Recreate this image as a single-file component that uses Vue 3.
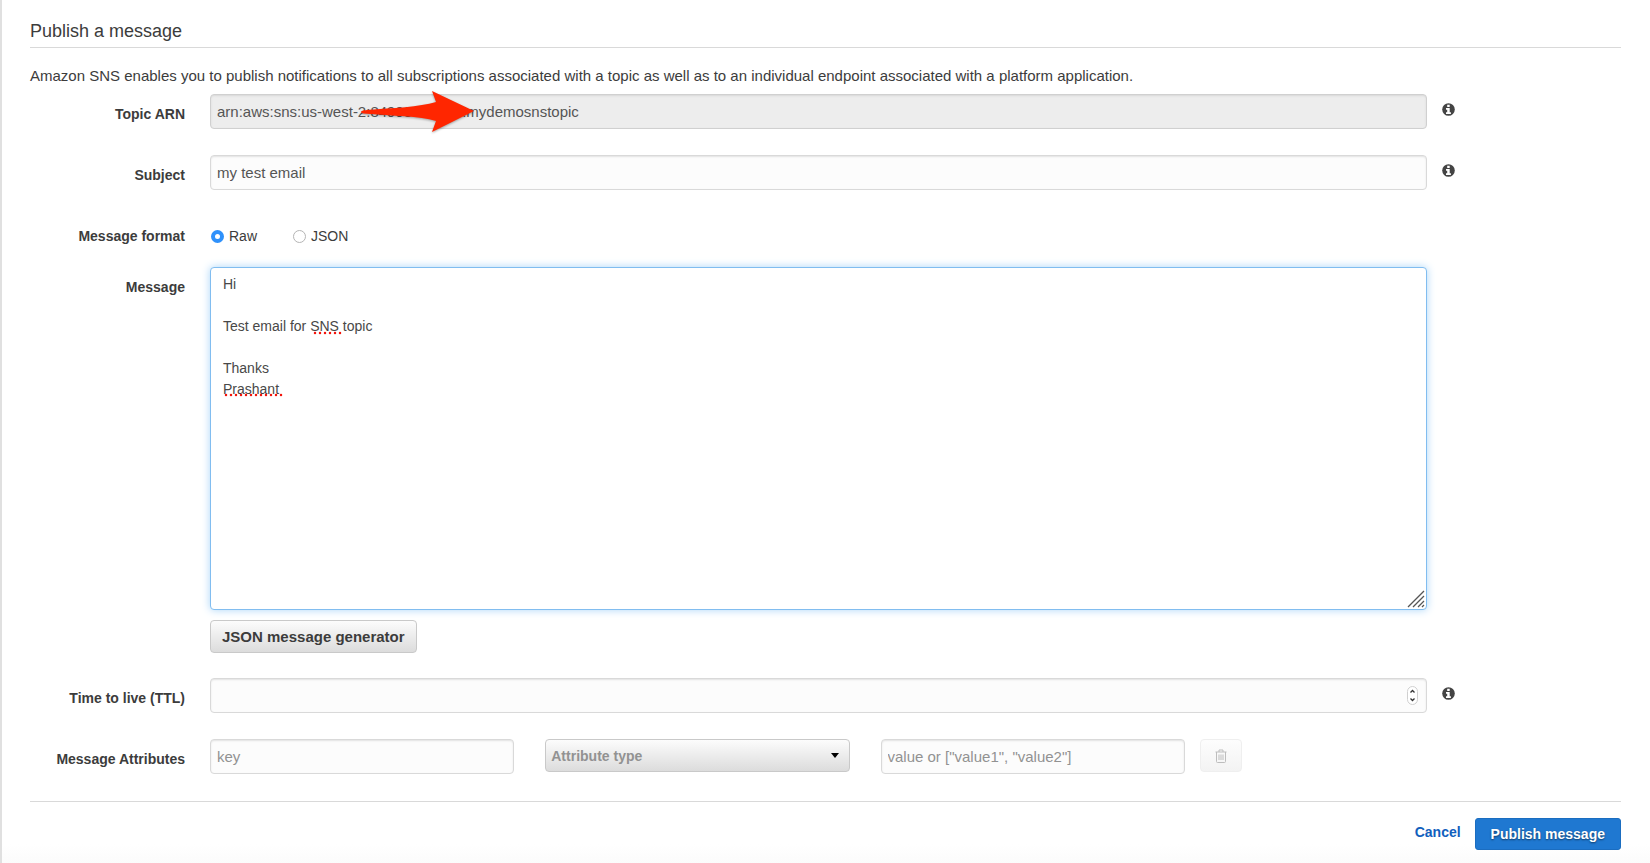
<script setup>
import { ref } from 'vue'

const arn = ref('arn:aws:sns:us-west-2:84993412000:mydemosnstopic')
const subject = ref('my test email')
const format = ref('raw')
const message = ref('Hi\n\nTest email for SNS topic\n\nThanks\nPrashant')
const ttl = ref('')
const attrKey = ref('')
const attrType = ref('')
const attrValue = ref('')
</script>

<template>
  <main class="page">
    <h1>Publish a message</h1>
    <p class="intro">Amazon SNS enables you to publish notifications to all subscriptions associated with a topic as well as to an individual endpoint associated with a platform application.</p>

    <form @submit.prevent>
      <div class="row">
        <label class="name" for="arn">Topic ARN</label>
        <div class="control">
          <input id="arn" v-model="arn" class="field readonly" type="text" readonly>
          <svg class="arrow" viewBox="0 0 120 48" aria-hidden="true">
            <path d="M2 20.500 C2 18.500 4 18.500 8 18 C35 16 60 15 77 10 L73 -1 L115 19 L73 40 L77 29 C60 24 35 24 4 21.500 Z" transform="translate(0 3)" fill="#ff2600" />
          </svg>
        </div>
        <button class="info" type="button" aria-label="About the topic ARN">
          <svg viewBox="0 0 13 13"><circle cx="6.500" cy="6.500" r="6.300" fill="#444" /><path d="M5.200 1.800h2.500v2.200H5.200zM4 5h3.700v4.200h1.200v1.700H4V9.200h1.200V6.700H4z" fill="#fff" /></svg>
        </button>
      </div>

      <div class="row">
        <label class="name" for="subject">Subject</label>
        <div class="control">
          <input id="subject" v-model="subject" class="field" type="text">
        </div>
        <button class="info" type="button" aria-label="About the subject">
          <svg viewBox="0 0 13 13"><circle cx="6.500" cy="6.500" r="6.300" fill="#444" /><path d="M5.200 1.800h2.500v2.200H5.200zM4 5h3.700v4.200h1.200v1.700H4V9.200h1.200V6.700H4z" fill="#fff" /></svg>
        </button>
      </div>

      <div class="row format" role="radiogroup" aria-labelledby="format-name">
        <span id="format-name" class="name">Message format</span>
        <div class="control radios">
          <label><input v-model="format" type="radio" name="format" value="raw">Raw</label>
          <label><input v-model="format" type="radio" name="format" value="json">JSON</label>
        </div>
      </div>

      <div class="row body">
        <label class="name" for="message">Message</label>
        <div class="control">
          <textarea id="message" v-model="message" spellcheck="false"></textarea>
          <svg class="spelling" viewBox="0 0 160 70" aria-hidden="true">
            <path d="M92 2H119M3 64H59" fill="none" stroke="#f3150c" stroke-width="2.500" stroke-linecap="round" stroke-dasharray="0 5" />
          </svg>
          <svg class="grip" viewBox="0 0 18 18" aria-hidden="true">
            <path d="M1 17L17 1M6 17L17 6M11 17L17 11M15 17L17 15" fill="none" stroke="#555" stroke-width="1.300" />
          </svg>
        </div>
      </div>

      <div class="row generator">
        <span></span>
        <div class="control"><button class="button wide" type="button">JSON message generator</button></div>
      </div>

      <div class="row">
        <label class="name" for="ttl">Time to live (TTL)</label>
        <div class="control">
          <input id="ttl" v-model="ttl" class="field" type="number">
          <svg class="stepper" viewBox="0 0 12 20" aria-hidden="true">
            <rect x=".5" y=".5" width="10" height="18" rx="5" fill="#fff" stroke="#d0d0d0" />
            <path d="M3.500 6.500l2-2 2 2M3.500 12.500l2 2 2-2" fill="none" stroke="#333" stroke-width="1.300" />
          </svg>
        </div>
        <button class="info" type="button" aria-label="About time to live">
          <svg viewBox="0 0 13 13"><circle cx="6.500" cy="6.500" r="6.300" fill="#444" /><path d="M5.200 1.800h2.500v2.200H5.200zM4 5h3.700v4.200h1.200v1.700H4V9.200h1.200V6.700H4z" fill="#fff" /></svg>
        </button>
      </div>

      <div class="row attributes">
        <label class="name" for="attr-key">Message Attributes</label>
        <div class="control attrs">
          <input id="attr-key" v-model="attrKey" class="field" type="text" placeholder="key">
          <div class="picker">
            <select v-model="attrType" class="button" aria-label="Attribute type">
              <option value="">Attribute type</option>
              <option value="String">String</option>
              <option value="Number">Number</option>
            </select>
            <svg class="caret" viewBox="0 0 8 5" aria-hidden="true"><path d="M0 0H8L4 5Z" fill="#000" /></svg>
          </div>
          <input v-model="attrValue" class="field" type="text" aria-label="Attribute value" placeholder="value or [&quot;value1&quot;, &quot;value2&quot;]">
          <button class="button trash" type="button" aria-label="Remove attribute" disabled>
            <svg viewBox="0 0 12 14"><path d="M.5 3h11M4 3V1h4v2M1.500 3v9.500q0 1 1 1h7q1 0 1-1V3M4 5.500v5.500M6 5.500v5.500M8 5.500v5.500" fill="none" stroke="#bdbdbd" /></svg>
          </button>
        </div>
      </div>

      <footer>
        <a href="#">Cancel</a>
        <button class="publish" type="submit">Publish message</button>
      </footer>
    </form>
  </main>
</template>

<style>
body { margin: 0; background: #fff; }
</style>

<style scoped>
* { box-sizing: border-box; }
.page {
  min-height: 100vh;
  padding: 16px 29px 14px 28px;
  border-left: 2px solid #e0e0e0;
  background: linear-gradient(to top, #fbfbfb, #fff 20px);
  color: #3c3c3c;
  font: 14px/20px "Helvetica Neue", "Liberation Sans", Arial, sans-serif;
}
h1 {
  margin: 0 0 18px;
  border-bottom: 1px solid #d9d9d9;
  font-size: 18px;
  font-weight: 400;
  line-height: 31px;
}
.intro { margin: 0 0 8px; font-size: 15px; }
.row {
  display: grid;
  grid-template-columns: 180px minmax(0, 1fr) 194px;
  margin-bottom: 26px;
}
.name { padding: 10px 25px 0 0; font-weight: 700; text-align: right; }
.control { position: relative; }
.field, textarea {
  display: block;
  width: 100%;
  margin: 0;
  border: 1px solid #d9d9d9;
  border-radius: 4px;
  color: #555;
  font-family: inherit;
  outline: none;
}
.field {
  height: 35px;
  padding: 0 6px;
  background: #fcfcfc;
  box-shadow: inset 0 1px 2px #e2e2e2;
  font-size: 15px;
  appearance: textfield;
}
.field::placeholder { color: #929292; }
.field.readonly { background: #ededed; border-color: #d0d0d0; box-shadow: inset 0 1px 2px #d8d8d8; }
.arrow { position: absolute; left: 149px; top: -5px; width: 120px; height: 48px; overflow: visible; filter: drop-shadow(0 1px 1px #0005); }
.info { align-self: start; width: 13px; height: 13px; margin: 9px 0 0 15px; padding: 0; border: 0; background: none; }
.info svg { display: block; width: 13px; height: 13px; }
.format { margin-bottom: 21px; }
.radios { display: flex; gap: 36px; padding: 10px 0 0 1px; }
.radios label { display: flex; align-items: center; gap: 5px; }
.radios input {
  appearance: none;
  width: 13px;
  height: 13px;
  margin: 0;
  border: 1px solid #b5b5b5;
  border-radius: 50%;
  background: #fff;
}
.radios input:checked { border: 4px solid #2f91fb; }
.body { margin-bottom: 10px; }
textarea {
  height: 343px;
  padding: 6px 12px;
  border-color: #81bdf0;
  background: #fff;
  box-shadow: 0 0 8px #a9d5f8;
  color: #484848;
  font-size: 14px;
  line-height: 21px;
  resize: none;
}
.spelling { position: absolute; left: 13px; top: 64px; width: 160px; height: 70px; pointer-events: none; }
.grip { position: absolute; right: 2px; bottom: 2px; width: 18px; height: 18px; }
.generator { margin-bottom: 25px; }
.button {
  height: 33px;
  margin: 0;
  padding: 0 14px;
  border: 1px solid #c9c9c9;
  border-radius: 4px;
  background: linear-gradient(#fcfcfc, #dcdcdc);
  color: #3c3c3c;
  font: inherit;
  font-weight: 700;
}
.wide { display: block; padding: 0 11px; font-size: 15px; }
.stepper { position: absolute; right: 8px; top: 8px; width: 12px; height: 20px; pointer-events: none; }
.attributes { margin-bottom: 27px; }
.attrs { display: flex; gap: 31px; }
.attrs .field, .picker { flex: 0 0 25%; }
.picker { position: relative; }
.picker select { appearance: none; width: 100%; padding: 0 5px; color: #929292; }
.caret { position: absolute; right: 11px; top: 14px; width: 8px; height: 5px; pointer-events: none; }
.trash { width: 42px; margin-left: -16px; padding: 0; border-color: #efefef; background: linear-gradient(#fdfdfd, #f3f3f3); }
.trash svg { display: block; width: 12px; height: 14px; margin: 0 auto; }
footer {
  display: flex;
  justify-content: flex-end;
  align-items: flex-start;
  gap: 14px;
  padding-top: 16px;
  border-top: 1px solid #d9d9d9;
}
footer a { color: #1160bd; font-weight: 700; line-height: 28px; text-decoration: none; }
.publish {
  height: 32px;
  padding: 0 15px;
  border: 1px solid #1b6dc0;
  border-radius: 3px;
  background: #1f78d1;
  color: #fff;
  font: inherit;
  font-weight: 700;
  text-shadow: 0 1px 2px #0008;
}
</style>
